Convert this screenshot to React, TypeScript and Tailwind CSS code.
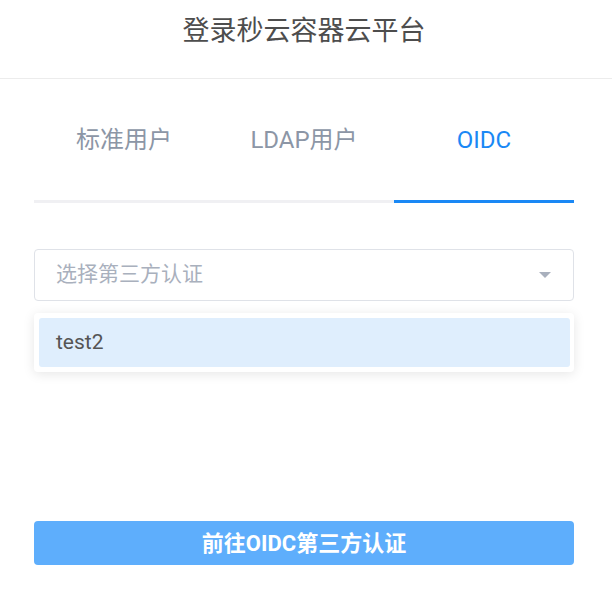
import { useState } from 'react'

const tabs = ['标准用户', 'LDAP用户', 'OIDC']

export default function App() {
  const [active, setActive] = useState(2)

  return (
    <div
      className="w-[612px] h-[592px] bg-white overflow-hidden"
      style={{ fontFamily: 'Roboto, "Noto Sans CJK SC", sans-serif' }}
    >
      <div className="h-[79px] border-b border-[#ececec] flex items-center justify-center pr-[4px]">
        <h1 className="text-[27px] text-[#4d4d4d] font-normal leading-none -mt-[15px]">登录秒云容器云平台</h1>
      </div>

      <div className="pl-[34px] pr-[38px]">
        <div className="grid grid-cols-3 mt-[20px]">
          {tabs.map((t, i) => (
            <button
              key={t}
              onClick={() => setActive(i)}
              className={
                'h-[104px] pb-[20px] text-[24px] leading-none border-b-[3px] ' +
                (i === active ? 'text-[#1a88f5] border-[#1a88f5]' : 'text-[#8c96a6] border-[#f0f0f3]')
              }
            >
              {t}
            </button>
          ))}
        </div>

        <div className="relative mt-[46px]">
          <div className="h-[52px] border border-[#dfe2e8] rounded-[4px] flex items-center justify-between pl-[21px] pr-[22px]">
            <span className="text-[21px] text-[#a9b0bd]">选择第三方认证</span>
            <span className="w-0 h-0 border-l-[6px] border-r-[6px] border-t-[6px] border-l-transparent border-r-transparent border-t-[#a9b0bd]" />
          </div>

          <div className="absolute left-0 right-0 top-[64px] bg-white rounded-[4px] p-[5px] pr-[4px] shadow-[0_2px_12px_rgba(0,0,0,0.1)]">
            <div className="h-[49px] bg-[#dfeefd] rounded-[3px] flex items-center pl-[17px] text-[21px] text-[#555]">
              test2
            </div>
          </div>
        </div>

        <button className="mt-[220px] w-full h-[44px] rounded-[4px] bg-[#5eaefc] text-white text-[22px] font-bold">
          前往OIDC第三方认证
        </button>
      </div>
    </div>
  )
}
